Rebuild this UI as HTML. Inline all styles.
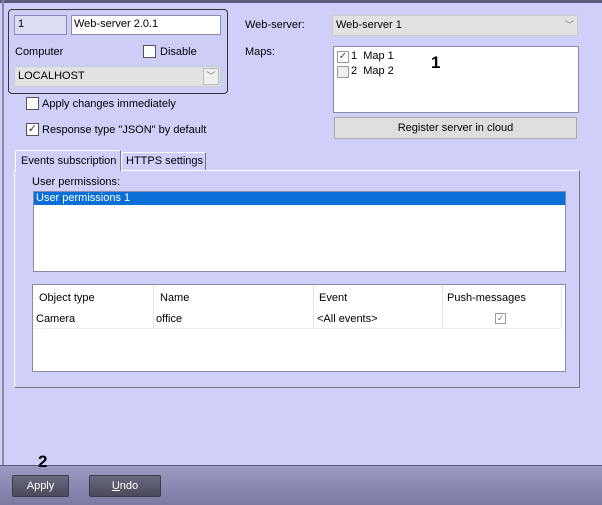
<!DOCTYPE html>
<html><head><style>
*{box-sizing:border-box}
body{margin:0;width:602px;height:505px;background:#cfcff9;font-family:"Liberation Sans",sans-serif;font-size:11px;color:#000;position:relative;overflow:hidden}
.a{position:absolute}
.w{background:#fff;border:1px solid #8a8aa8}
.cb{position:absolute;width:13px;height:13px;border:1px solid #555;background:#fff}
.t{position:absolute;white-space:nowrap}
</style></head><body>
<div class="a" style="left:0;top:0;width:602px;height:3px;background:#5a5a7a"></div>
<div class="a" style="left:2px;top:0;width:2px;height:466px;background:#8888a8"></div>
<div class="a" style="left:8px;top:9px;width:220px;height:85px;border:1px solid #333;border-radius:4px;background:#cdcdf7"></div>
<div class="a" style="left:14px;top:15px;width:53px;height:20px;background:#dcdcf5;border:1px solid #8a8ab8"></div>
<div class="t" style="left:18px;top:18px">1</div>
<div class="a w" style="left:71px;top:15px;width:150px;height:20px"></div>
<div class="t" style="left:74px;top:18px">Web-server 2.0.1</div>
<div class="t" style="left:15px;top:46px">Computer</div>
<div class="cb" style="left:143px;top:45px"></div>
<div class="t" style="left:160px;top:46px">Disable</div>
<div class="a" style="left:14px;top:66px;width:207px;height:21px;background:#e2e2e2;border:1px solid #ccc"></div>
<div class="t" style="left:18px;top:70px">LOCALHOST</div>
<div class="a" style="left:203px;top:68px;width:16px;height:17px;border:1px solid #bbb;background:#eee;font-size:9px;color:#777;text-align:center;line-height:15px">﹀</div>
<div class="cb" style="left:26px;top:97px"></div>
<div class="t" style="left:42px;top:98px">Apply changes immediately</div>
<div class="cb" style="left:26px;top:123px;font-size:11px;line-height:11px;text-align:center;color:#333">✓</div>
<div class="t" style="left:42px;top:124px">Response type "JSON" by default</div>
<div class="t" style="left:245px;top:19px">Web-server:</div>
<div class="a" style="left:332px;top:15px;width:246px;height:21px;background:#e2e2e2;border:1px solid #ccc"></div>
<div class="t" style="left:336px;top:19px">Web-server 1</div>
<div class="t" style="left:565px;top:18px;color:#777;font-size:9px">﹀</div>
<div class="t" style="left:245px;top:46px">Maps:</div>
<div class="a w" style="left:333px;top:46px;width:246px;height:67px"></div>
<div class="cb" style="left:337px;top:51px;width:12px;height:12px;border-color:#999;font-size:10px;line-height:10px;text-align:center;color:#3a3aa0">✓</div>
<div class="t" style="left:351px;top:50px">1 &nbsp;Map 1</div>
<div class="cb" style="left:337px;top:66px;width:12px;height:12px;border-color:#999;background:#eee"></div>
<div class="t" style="left:351px;top:65px">2 &nbsp;Map 2</div>
<div class="t" style="left:431px;top:53px;font-size:17px;font-weight:bold">1</div>
<div class="a" style="left:334px;top:117px;width:243px;height:22px;background:#dedede;border:1px solid #aaa;text-align:center;line-height:20px">Register server in cloud</div>
<div class="a" style="left:14px;top:170px;width:566px;height:218px;border:1px solid #fff;border-right-color:#777;border-bottom-color:#777"></div>
<div class="a" style="left:15px;top:150px;width:106px;height:21px;border:1px solid #fff;border-bottom:none;border-right-color:#777;background:#cfcff9"></div>
<div class="t" style="left:21px;top:155px">Events subscription</div>
<div class="a" style="left:121px;top:152px;width:85px;height:18px;border:1px solid #fff;border-bottom:none;border-right-color:#777"></div>
<div class="t" style="left:126px;top:155px">HTTPS settings</div>
<div class="t" style="left:32px;top:176px">User permissions:</div>
<div class="a w" style="left:33px;top:191px;width:533px;height:81px"></div>
<div class="a" style="left:34px;top:192px;width:531px;height:13px;background:#0a6fd6"></div>
<div class="t" style="left:36px;top:192px;color:#fff">User permissions 1</div>
<div class="a w" style="left:32px;top:284px;width:534px;height:88px"></div>
<div class="a" style="left:33px;top:328px;width:528px;height:1px;background:#eee"></div>
<div class="a" style="left:153px;top:285px;width:1px;height:43px;background:#e4e4e4"></div>
<div class="a" style="left:313px;top:285px;width:1px;height:43px;background:#e4e4e4"></div>
<div class="a" style="left:442px;top:285px;width:1px;height:43px;background:#e4e4e4"></div>
<div class="a" style="left:561px;top:285px;width:1px;height:43px;background:#e4e4e4"></div>
<div class="t" style="left:39px;top:292px">Object type</div>
<div class="t" style="left:160px;top:292px">Name</div>
<div class="t" style="left:319px;top:292px">Event</div>
<div class="t" style="left:447px;top:292px">Push-messages</div>
<div class="t" style="left:36px;top:313px">Camera</div>
<div class="t" style="left:156px;top:313px">office</div>
<div class="t" style="left:317px;top:313px">&lt;All events&gt;</div>
<div class="cb" style="left:495px;top:313px;width:11px;height:11px;border-color:#999;font-size:9px;line-height:9px;text-align:center;color:#777">✓</div>
<div class="a" style="left:0;top:465px;width:602px;height:40px;background:linear-gradient(#9a9ac2,#7a7aa2);border-top:1px solid #55557a"></div>
<div class="t" style="left:38px;top:452px;font-size:17px;font-weight:bold">2</div>
<div class="a" style="left:12px;top:475px;width:57px;height:22px;background:linear-gradient(#6a6a80,#4a4a5c);border:1px solid #3a3a48;border-radius:2px;color:#fff;text-align:center;line-height:20px">Apply</div>
<div class="a" style="left:89px;top:475px;width:72px;height:22px;background:linear-gradient(#6a6a80,#4a4a5c);border:1px solid #3a3a48;border-radius:2px;color:#fff;text-align:center;line-height:20px"><u>U</u>ndo</div>
</body></html>
